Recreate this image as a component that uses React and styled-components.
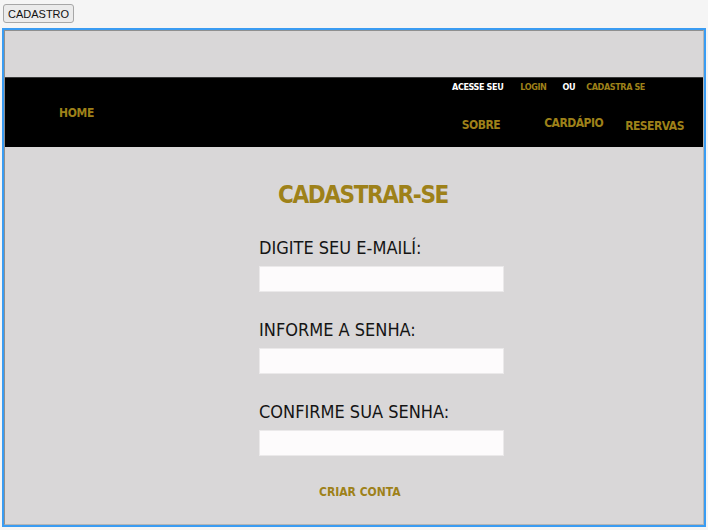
import React from "react";
import styled, { createGlobalStyle } from "styled-components";

const GOLD = "#9e8119";
const NARROW = `"Liberation Sans Narrow", "DejaVu Sans Condensed", "Liberation Sans", sans-serif`;

const Global = createGlobalStyle`
  html, body { margin: 0; padding: 0; background: #f5f5f5; }
  body { font-family: "Liberation Sans", Arial, sans-serif; }
  * { box-sizing: border-box; }
`;

const Page = styled.div`
  padding: 4px 2px 0 2px;
  display: flex;
  flex-direction: column;
  align-items: flex-start;
`;

const TabButton = styled.button`
  margin-left: 1px;
  height: 19px;
  padding: 0 4px;
  font-family: "Liberation Sans", Arial, sans-serif;
  font-size: 11px;
  color: #111;
  background: #ebebeb;
  border: 1px solid #a7a7a7;
  border-radius: 3px;
`;

const Frame = styled.div`
  margin-top: 5px;
  width: 704px;
  height: 499px;
  border: 2px solid #3a9cf2;
`;

const Viewport = styled.div`
  height: 100%;
  border: 1px solid #8f8f8f;
  border-right-color: #b5b5b5;
  border-bottom-color: #b5b5b5;
  background: #d9d7d8;
  padding-top: 46px;
  display: flex;
  flex-direction: column;
`;

const Header = styled.header`
  height: 70px;
  background: #000;
  border-top: 1px solid #3a3a3a;
  display: flex;
  align-items: center;
  justify-content: space-between;
  padding: 0 19px 0 54px;
  font-family: ${NARROW};
  font-weight: 700;
`;

const Brand = styled.a`
  color: ${GOLD};
  font-size: 12px;
  line-height: 16px;
  letter-spacing: -0.3px;
  text-decoration: none;
`;

const HeaderRight = styled.div`
  align-self: stretch;
  display: flex;
  flex-direction: column;
  align-items: flex-end;
  padding-top: 3px;
`;

const AccountRow = styled.div`
  display: flex;
  margin-right: 39px;
  font-size: 9px;
  line-height: 12px;
  letter-spacing: -0.4px;
`;

const AccountItem = styled.span`
  color: ${(p) => (p.$link ? GOLD : "#fff")};
  margin-left: ${(p) => p.$gap || 0}px;
`;

const Nav = styled.nav`
  display: flex;
  align-items: flex-start;
  margin-top: 24px;
`;

const NavLink = styled.a`
  color: ${GOLD};
  font-size: 12px;
  line-height: 16px;
  letter-spacing: -0.5px;
  text-decoration: none;
  margin-left: ${(p) => p.$gap || 0}px;
  transform: translateY(${(p) => p.$dy || 0}px);
`;

const Main = styled.main`
  padding: 31px 0 0 254px;
`;

const Form = styled.form`
  width: 245px;
  display: flex;
  flex-direction: column;
`;

const Title = styled.h1`
  margin: 0 0 24px 19px;
  font-family: ${NARROW};
  font-weight: 700;
  font-size: 24px;
  line-height: 34px;
  letter-spacing: -1.4px;
  color: ${GOLD};
`;

const Field = styled.div`
  display: flex;
  flex-direction: column;
  gap: 6px;
  margin-bottom: 26px;
`;

const Label = styled.label`
  font-family: ${NARROW};
  font-size: 18px;
  line-height: 24px;
  color: #141414;
  white-space: nowrap;
`;

const Input = styled.input`
  width: 245px;
  height: 26px;
  margin: 0;
  border: 1px solid #ebe9ea;
  background: #fdfbfc;
  outline: none;
`;

const Submit = styled.button`
  align-self: flex-start;
  margin: 1px 0 0 60px;
  padding: 0;
  border: none;
  background: none;
  font-family: ${NARROW};
  font-weight: 700;
  font-size: 12px;
  line-height: 18px;
  color: ${GOLD};
`;

export default function App() {
  return (
    <>
      <Global />
      <Page>
        <TabButton>CADASTRO</TabButton>
        <Frame>
          <Viewport>
            <Header>
              <Brand href="#">HOME</Brand>
              <HeaderRight>
                <AccountRow>
                  <AccountItem>ACESSE SEU</AccountItem>
                  <AccountItem $link $gap={17}>LOGIN</AccountItem>
                  <AccountItem $gap={16}>OU</AccountItem>
                  <AccountItem $link $gap={11}>CADASTRA SE</AccountItem>
                </AccountRow>
                <Nav>
                  <NavLink href="#">SOBRE</NavLink>
                  <NavLink href="#" $gap={44} $dy={-2}>CARDÁPIO</NavLink>
                  <NavLink href="#" $gap={22} $dy={1}>RESERVAS</NavLink>
                </Nav>
              </HeaderRight>
            </Header>
            <Main>
              <Form onSubmit={(e) => e.preventDefault()}>
                <Title>CADASTRAR-SE</Title>
                <Field>
                  <Label>DIGITE SEU E-MAILÍ:</Label>
                  <Input type="email" />
                </Field>
                <Field>
                  <Label>INFORME A SENHA:</Label>
                  <Input type="password" />
                </Field>
                <Field>
                  <Label>CONFIRME SUA SENHA:</Label>
                  <Input type="password" />
                </Field>
                <Submit type="submit">CRIAR CONTA</Submit>
              </Form>
            </Main>
          </Viewport>
        </Frame>
      </Page>
    </>
  );
}
